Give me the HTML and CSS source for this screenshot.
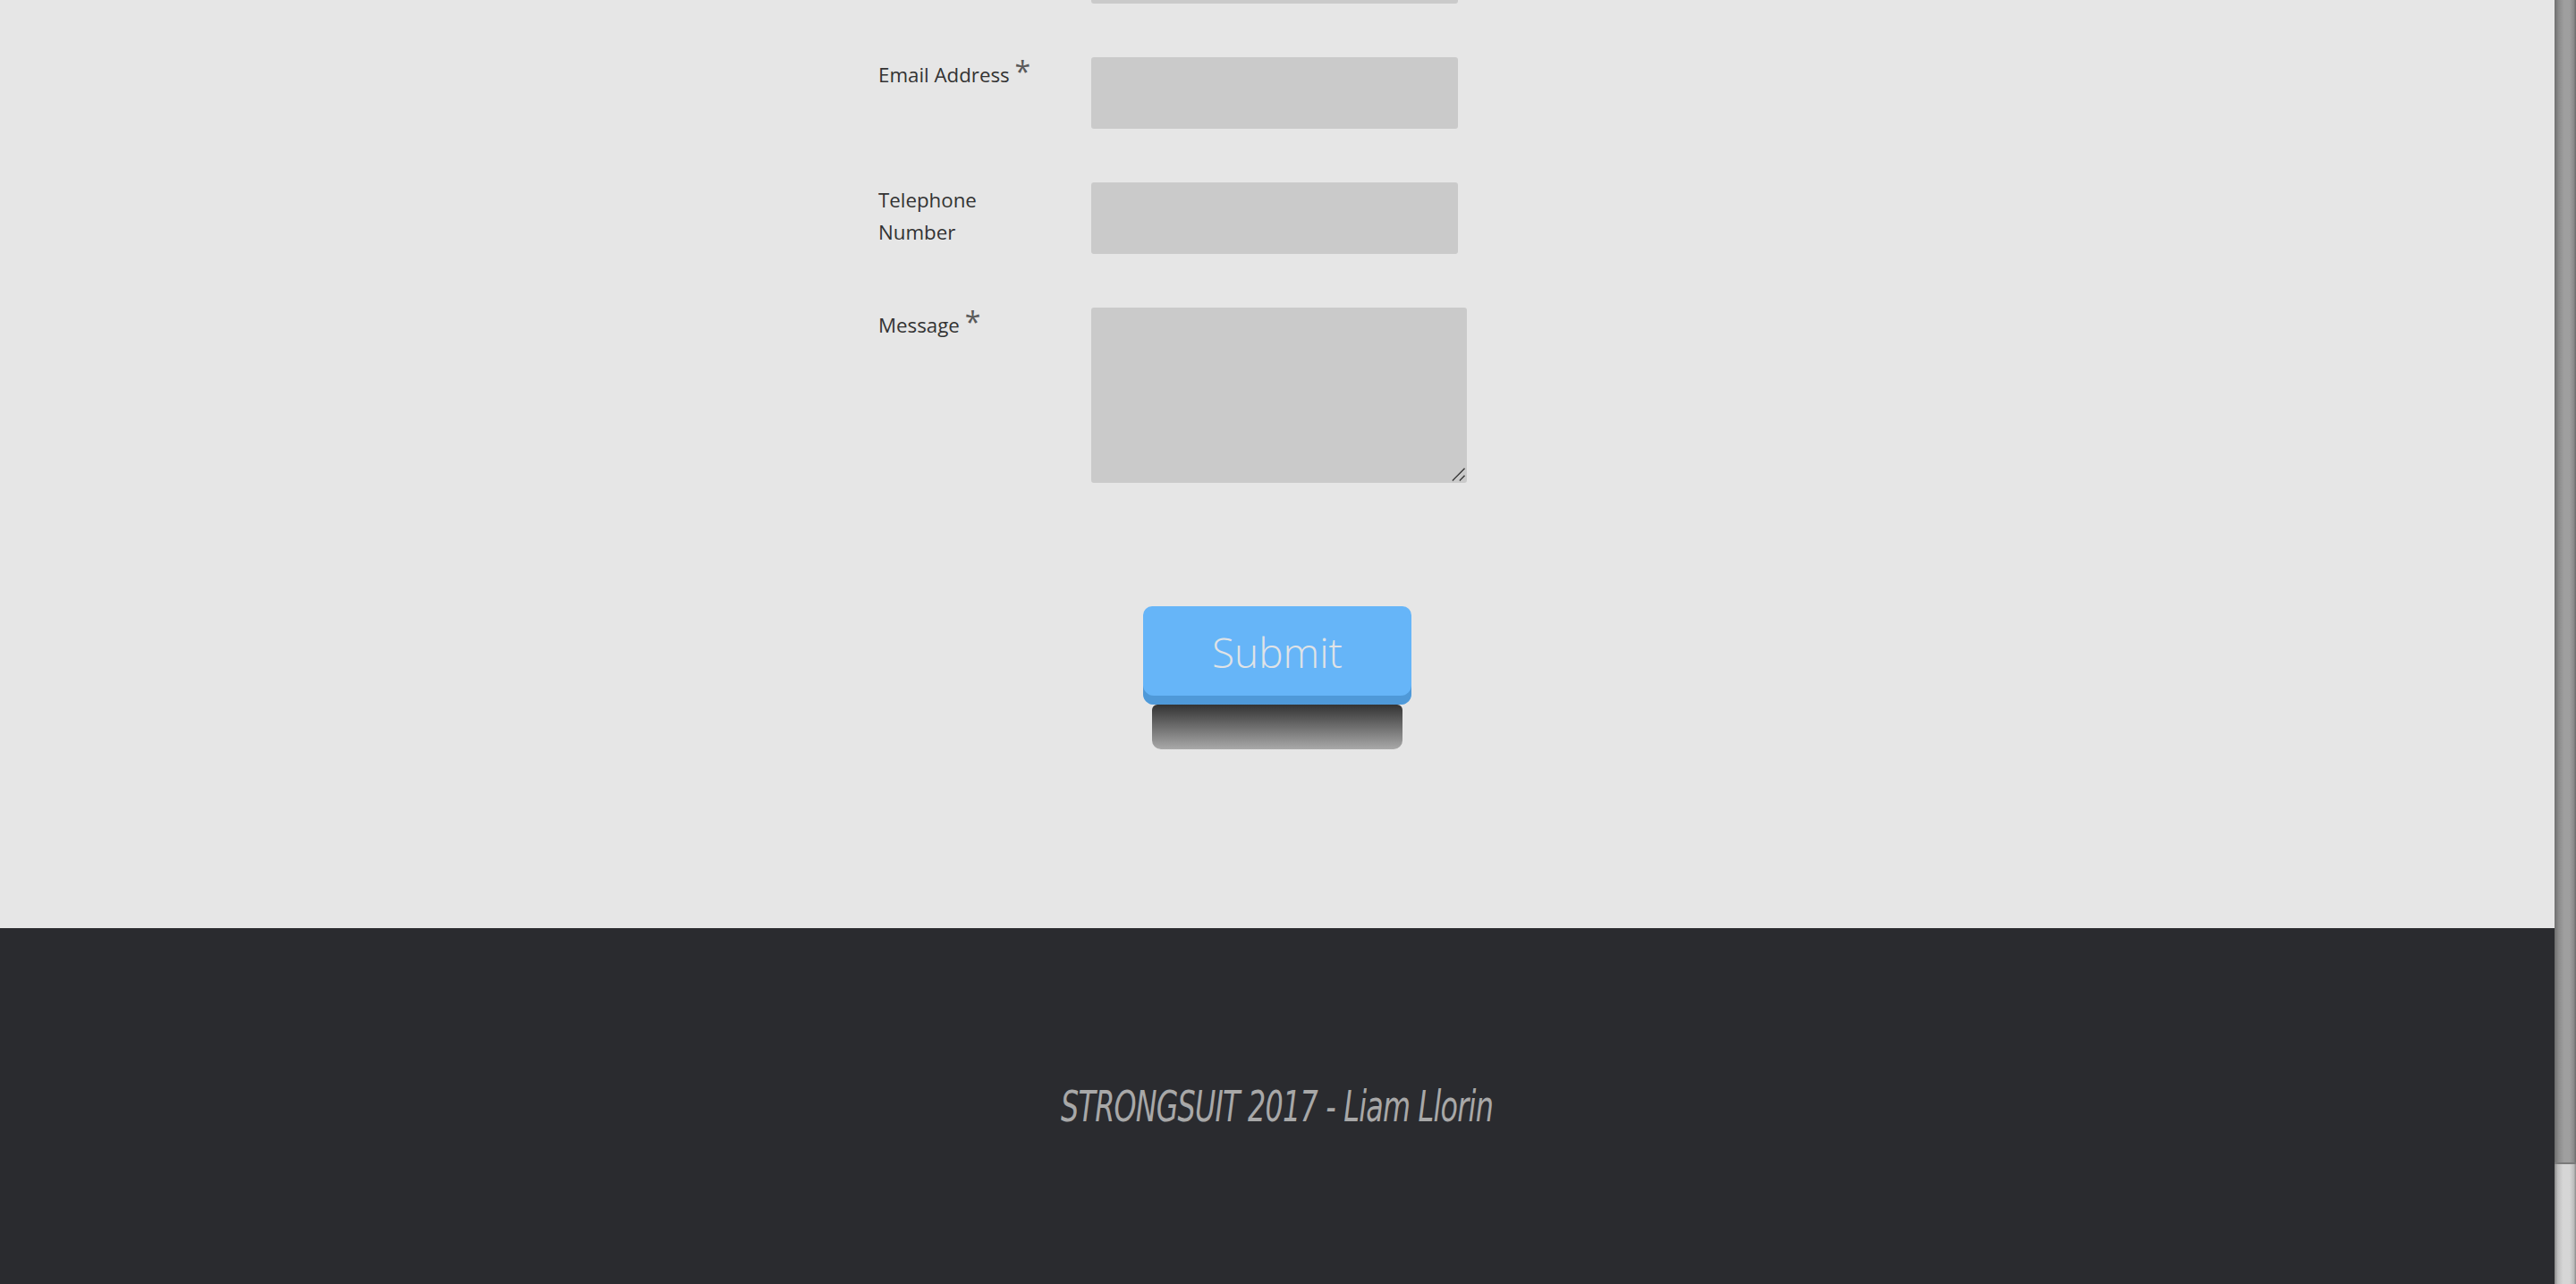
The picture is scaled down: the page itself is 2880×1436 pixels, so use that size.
FILE: index.html
```html
<!DOCTYPE html>
<html lang="en">
<head>
<meta charset="utf-8">
<title>Contact - Strongsuit</title>
<link rel="stylesheet" href="styles.css">
</head>
<body>
<div class="page">
  <div class="main">
    <section class="contact">
      <form class="form" onsubmit="return false">
        <div class="row">
          <span class="label"></span>
          <input class="field" id="name" type="text" aria-label="Name">
        </div>
        <div class="row">
          <label class="label" for="email">Email Address <span class="req">*</span></label>
          <input class="field" id="email" type="email">
        </div>
        <div class="row">
          <label class="label" for="tel">Telephone Number</label>
          <input class="field" id="tel" type="tel">
        </div>
        <div class="row">
          <label class="label" for="msg">Message <span class="req">*</span></label>
          <div class="area-wrap">
            <textarea class="area" id="msg"></textarea>
            <svg class="grip" width="18" height="18" viewBox="0 0 18 18" aria-hidden="true">
              <g stroke-linecap="square">
                <path d="M4.5 16.5 L16.5 4.5" stroke="#f2f2f2" stroke-width="1"/>
                <path d="M12.5 16.5 L16.5 12.5" stroke="#f2f2f2" stroke-width="1"/>
                <path d="M3.5 16 L16 3.5" stroke="#454545" stroke-width="1.6"/>
                <path d="M11.5 16 L16 11.5" stroke="#454545" stroke-width="1.6"/>
              </g>
            </svg>
          </div>
        </div>
      </form>
      <div class="actions">
        <button class="submit" type="button">Submit</button>
        <div class="submit-shadow"></div>
      </div>
    </section>
    <footer class="footer">
      <p class="credit">STRONGSUIT 2017 - Liam Llorin</p>
    </footer>
  </div>
  <div class="scrollbar">
    <div class="track"></div>
    <div class="thumb"></div>
  </div>
</div>
</body>
</html>
```

FILE: styles.css
```css
html, body {
  margin: 0;
  padding: 0;
  height: 100%;
  overflow: hidden;
}

body {
  background: #e6e6e6;
  font-family: "Open Sans", "Noto Sans", sans-serif;
}

.page {
  display: flex;
  height: 1436px;
}

.main {
  flex: 1;
  display: flex;
  flex-direction: column;
  min-width: 0;
}

.contact {
  height: 1038px;
  background: #e6e6e6;
  display: flex;
  flex-direction: column;
  align-items: center;
  overflow: hidden;
}

.form {
  width: 892px;
  margin-top: -76px;
  display: flex;
  flex-direction: column;
  gap: 60px;
}

.row {
  display: flex;
  align-items: flex-start;
}

.label {
  width: 180px;
  margin-right: 58px;
  padding-top: 2px;
  font-size: 22.3px;
  line-height: 36px;
  color: #333;
}

.req {
  font-size: 32px;
  line-height: 0;
  color: #5a5a5a;
}

.field {
  width: 410px;
  height: 80px;
  box-sizing: border-box;
  border: none;
  border-radius: 3px;
  background: #cacaca;
  margin: 0;
  padding: 0 12px;
  font: inherit;
}

.area-wrap {
  position: relative;
  width: 420px;
  height: 196px;
}

.area {
  display: block;
  width: 420px;
  height: 196px;
  box-sizing: border-box;
  border: none;
  border-radius: 3px;
  background: #cacaca;
  margin: 0;
  padding: 10px;
  font: inherit;
  resize: none;
}

.grip {
  position: absolute;
  right: 1px;
  bottom: 1px;
  pointer-events: none;
}

.actions {
  margin-top: 138px;
  display: flex;
  flex-direction: column;
  align-items: center;
}

.submit {
  width: 300px;
  height: 110px;
  border: none;
  border-radius: 10px 10px 12px 12px;
  background: #66b5f8;
  box-shadow: inset 0 -10px 0 #4f99d8;
  color: #e0e3e6;
  font-family: "Open Sans", sans-serif;
  font-weight: 300;
  font-size: 46px;
  padding: 0 0 8px;
  cursor: pointer;
}

.submit-shadow {
  width: 280px;
  height: 50px;
  border-radius: 6px 6px 10px 10px;
  background: linear-gradient(#333333, #a9a9a9);
}

.footer {
  flex: 1;
  background: #2a2b2f;
  display: flex;
  align-items: center;
  justify-content: center;
}

.credit {
  margin: 0;
  font-family: "Liberation Sans Narrow", "DejaVu Sans Condensed", "Liberation Sans", sans-serif;
  font-style: italic;
  font-size: 48px;
  color: #a8a8a8;
  letter-spacing: -1px;
  transform: scaleX(0.735);
}

.scrollbar {
  width: 24px;
  display: flex;
  flex-direction: column;
  flex-shrink: 0;
}

.track {
  flex: 1;
  background: linear-gradient(90deg, #6e6e6e 0%, #8c8c8c 20%, #9f9f9f 45%, #9f9f9f 70%, #8a8a8a 90%, #6a6a6a 100%);
}

.thumb {
  height: 136px;
  border-top: 2px solid #7a7a7a;
  box-sizing: border-box;
  background: linear-gradient(90deg, #8a8a8a 0%, #bdbdbd 15%, #d6d6d6 40%, #d6d6d6 70%, #bdbdbd 90%, #8a8a8a 100%);
}
```
